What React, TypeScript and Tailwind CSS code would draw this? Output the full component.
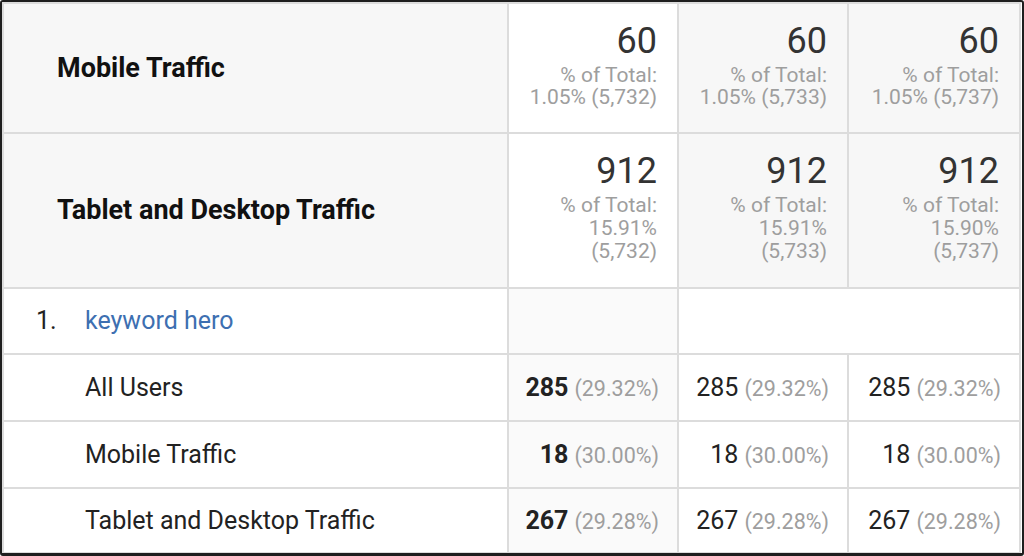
const font = { fontFamily: "Roboto, 'Liberation Sans', sans-serif" };

const totals = [
  {
    label: "Mobile Traffic",
    value: "60",
    rows: "h-[130px]",
    lead: "leading-[22px]",
    notes: [
      ["% of Total:", "1.05% (5,732)"],
      ["% of Total:", "1.05% (5,733)"],
      ["% of Total:", "1.05% (5,737)"],
    ],
  },
  {
    label: "Tablet and Desktop Traffic",
    value: "912",
    rows: "h-[155px]",
    lead: "leading-[23px]",
    notes: [
      ["% of Total:", "15.91%", "(5,732)"],
      ["% of Total:", "15.91%", "(5,733)"],
      ["% of Total:", "15.90%", "(5,737)"],
    ],
  },
];

const segments = [
  { label: "All Users", value: "285", pct: "(29.32%)", h: "h-[67px]" },
  { label: "Mobile Traffic", value: "18", pct: "(30.00%)", h: "h-[67px]" },
  { label: "Tablet and Desktop Traffic", value: "267", pct: "(29.28%)", h: "h-[65px]" },
];

export default function App() {
  return (
    <div
      className="w-[1024px] h-[556px] overflow-hidden rounded-[3px] border-2 border-b-[3px] border-[#1e1e1e] bg-white"
      style={font}
    >
      <table className="w-[1017px] table-fixed border-collapse border-2 border-[#dcdcdc]">
        <colgroup>
          <col className="w-[505px]" />
          <col className="w-[170px]" />
          <col className="w-[170px]" />
          <col className="w-[172px]" />
        </colgroup>
        <tbody>
          {/* Totals */}
          {totals.map((t) => (
            <tr key={t.label} className={t.rows}>
              <td className="border-2 border-[#dcdcdc] bg-[#f7f7f7] pl-[53px] text-[27px] font-bold text-[#111]">
                {t.label}
              </td>
              {t.notes.map((lines, i) => (
                <td
                  key={i}
                  className={`border-2 border-[#dcdcdc] pr-[20px] pb-[6px] text-right align-middle ${
                    i === 0 ? "bg-white" : "bg-[#f7f7f7]"
                  }`}
                >
                  <div className="mb-[4px] text-[36px] leading-[38px] text-[#333]">{t.value}</div>
                  <div className={`text-[21px] ${t.lead} text-[#9e9e9e]`}>
                    {lines.map((l) => (
                      <div key={l}>{l}</div>
                    ))}
                  </div>
                </td>
              ))}
            </tr>
          ))}

          {/* Keyword row */}
          <tr className="h-[66px]">
            <td className="border-2 border-[#dcdcdc] bg-white text-[25px]">
              <div className="flex items-center">
                <span className="w-[50px] pl-[32px] text-[#222] box-content">1.</span>
                <span className="-ml-[1px] text-[#3d6fb1]">keyword hero</span>
              </div>
            </td>
            <td className="border-2 border-[#dcdcdc] bg-[#fafafa]" />
            <td colSpan={2} className="border-2 border-[#dcdcdc] bg-white" />
          </tr>

          {/* Segment rows */}
          {segments.map((s) => (
            <tr key={s.label} className={s.h}>
              <td className="border-2 border-[#dcdcdc] bg-white pl-[81px] text-[25px] text-[#222]">
                {s.label}
              </td>
              {[0, 1, 2].map((i) => (
                <td
                  key={i}
                  className={`border-2 border-[#dcdcdc] pr-[18px] text-right whitespace-nowrap ${
                    i === 0 ? "bg-[#fafafa]" : "bg-white"
                  }`}
                >
                  <span className={`text-[25px] text-[#222] ${i === 0 ? "font-bold" : ""}`}>
                    {s.value}
                  </span>
                  <span className="ml-[6px] text-[21.5px] text-[#9e9e9e]">{s.pct}</span>
                </td>
              ))}
            </tr>
          ))}
        </tbody>
      </table>
    </div>
  );
}
